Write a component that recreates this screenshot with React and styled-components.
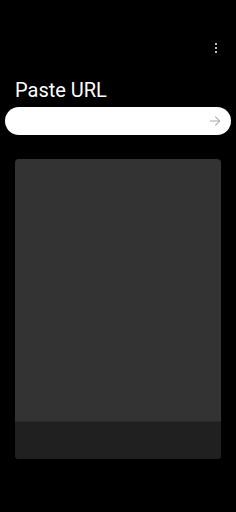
import React from "react";
import styled, { createGlobalStyle } from "styled-components";

const Global = createGlobalStyle`
  html, body { margin: 0; padding: 0; background: #000; }
  body { font-family: Roboto, "Noto Sans", sans-serif; width: 236px; height: 512px; overflow: hidden; }
`;

const Screen = styled.div`
  display: flex;
  flex-direction: column;
  width: 236px;
  height: 512px;
  background: #000;
`;

const TopBar = styled.div`
  display: flex;
  justify-content: flex-end;
  padding: 36px 8px 0 0;
`;

const MenuButton = styled.button`
  width: 24px;
  height: 24px;
  padding: 0;
  border: 0;
  background: transparent;
  display: flex;
  flex-direction: column;
  align-items: center;
  justify-content: center;
  gap: 2px;
`;

const Dot = styled.span`
  width: 2px;
  height: 2px;
  background: #fff;
  border-radius: 1px;
`;

const Title = styled.h1`
  margin: 18px 0 0 15px;
  font-size: 20px;
  line-height: 24px;
  font-weight: 400;
  color: #fff;
`;

const UrlBar = styled.div`
  margin: 5px 5px 0 5px;
  height: 28px;
  border-radius: 14px;
  background: #fff;
  display: flex;
  align-items: center;
  padding: 0 9px 0 14px;
`;

const UrlInput = styled.input`
  flex: 1;
  min-width: 0;
  border: 0;
  outline: none;
  background: transparent;
  font-family: Roboto, sans-serif;
  font-size: 13px;
`;

const Card = styled.div`
  margin: 24px 15px 0 15px;
  height: 300px;
  border-radius: 4px;
  background: #333333;
  display: flex;
  flex-direction: column;
  overflow: hidden;
`;

const Preview = styled.div`
  flex: 1;
`;

const CardFooter = styled.div`
  height: 37px;
  background: #202020;
  border-top: 1px solid #2a2a2a;
`;

const Arrow = () => (
  <svg width="14" height="14" viewBox="0 0 24 24" fill="none" stroke="#a8a8a8" strokeWidth="1.8" strokeLinecap="round" strokeLinejoin="round">
    <path d="M4 12h16" />
    <path d="M13 5l7 7-7 7" />
  </svg>
);

export default function App() {
  return (
    <>
      <Global />
      <Screen>
        <TopBar>
          <MenuButton aria-label="menu">
            <Dot />
            <Dot />
            <Dot />
          </MenuButton>
        </TopBar>
        <Title>Paste URL</Title>
        <UrlBar>
          <UrlInput />
          <Arrow />
        </UrlBar>
        <Card>
          <Preview />
          <CardFooter />
        </Card>
      </Screen>
    </>
  );
}
